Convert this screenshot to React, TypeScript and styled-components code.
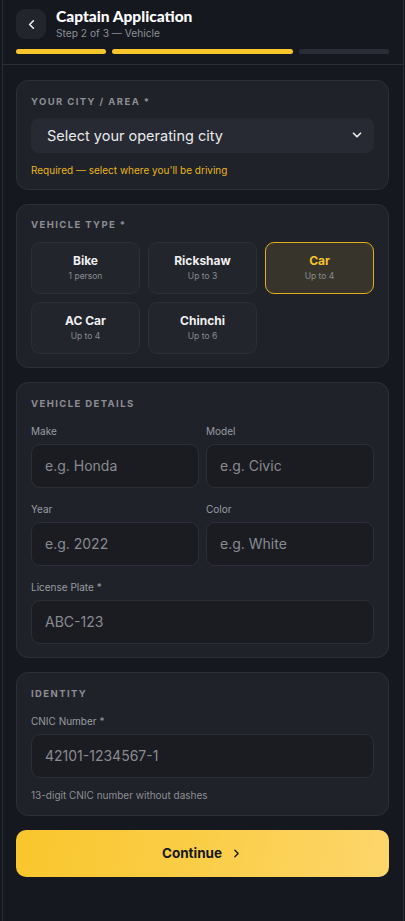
import React from "react";
import styled, { createGlobalStyle } from "styled-components";
import { ChevronLeft, ChevronDown, ChevronRight } from "lucide-react";

const Global = createGlobalStyle`
  html, body { margin: 0; padding: 0; background: #14171e; }
  body { font-family: Inter, "Liberation Sans", Arial, sans-serif; color: #e8e8ea; }
  * { box-sizing: border-box; }
`;

const Shell = styled.div`
  width: 402px;
  min-height: 921px;
  margin: 0 auto;
  background: #15181f;
  border-left: 1px solid #2a2d35;
  border-right: 1px solid #2a2d35;
`;

const Header = styled.header`
  padding: 9px 13.5px 10px;
  border-bottom: 1px solid #2a2d35;
`;

const TopRow = styled.div`
  display: flex;
  align-items: center;
  gap: 10px;
  height: 30px;
`;

const BackButton = styled.button`
  width: 30px;
  height: 30px;
  border: none;
  border-radius: 9px;
  background: #22252c;
  color: #f2f2f2;
  display: flex;
  align-items: center;
  justify-content: center;
  padding: 0;
`;

const TitleBlock = styled.div`
  display: flex;
  flex-direction: column;
  gap: 1px;
`;

const Title = styled.h1`
  margin: 0;
  font-family: Lato, Inter, sans-serif;
  font-weight: 900;
  font-size: 15.5px;
  line-height: 17px;
  color: #ffffff;
`;

const Subtitle = styled.div`
  font-size: 10.2px;
  line-height: 14px;
  color: #8c8f96;
`;

const Progress = styled.div`
  display: flex;
  gap: 6px;
  margin-top: 10px;
`;

const Bar = styled.div<{ $grow: number; $on: boolean }>`
  flex: ${(p) => p.$grow};
  height: 4.5px;
  border-radius: 3px;
  background: ${(p) => (p.$on ? "#f8c52c" : "#2a2d35")};
`;

const Content = styled.main`
  padding: 15px 13.5px;
  display: flex;
  flex-direction: column;
  gap: 14px;
`;

const Card = styled.section<{ $pb?: number }>`
  background: #1f2229;
  border: 1px solid #2c2f37;
  border-radius: 12px;
  padding: 14px 14px ${(p) => p.$pb ?? 13}px;
`;

const SectionLabel = styled.div<{ $mt?: number }>`
  font-size: 9.5px;
  font-weight: 700;
  letter-spacing: 1.4px;
  text-transform: uppercase;
  color: #8d8e92;
  line-height: 12px;
  margin-top: ${(p) => p.$mt ?? 0}px;
`;

const SelectBox = styled.div`
  margin-top: 10px;
  height: 35px;
  border-radius: 8px;
  background: #272a32;
  display: flex;
  align-items: center;
  justify-content: space-between;
  padding: 0 10px 0 16px;
  font-size: 14.5px;
  color: #e9e9eb;
`;

const Hint = styled.div<{ $warn?: boolean; $mt?: number }>`
  margin-top: ${(p) => p.$mt ?? 10}px;
  font-size: 10px;
  line-height: 14px;
  color: ${(p) => (p.$warn ? "#e8b51f" : "#8d8e92")};
`;

const TypeGrid = styled.div`
  margin-top: 11px;
  display: grid;
  grid-template-columns: repeat(3, 1fr);
  gap: 8px;
`;

const TypeOption = styled.div<{ $active?: boolean }>`
  height: 52px;
  border-radius: 9px;
  border: 1px solid ${(p) => (p.$active ? "#e3ad1e" : "#2c2f37")};
  background: ${(p) => (p.$active ? "#37352b" : "#22252c")};
  display: flex;
  flex-direction: column;
  align-items: center;
  justify-content: center;
  gap: 3px;
`;

const TypeName = styled.div<{ $active?: boolean }>`
  font-size: 12px;
  font-weight: 700;
  color: ${(p) => (p.$active ? "#f8c52c" : "#f0f0f2")};
  line-height: 14px;
`;

const TypeSub = styled.div`
  font-size: 8.5px;
  color: #8a8c91;
  line-height: 10px;
`;

const FieldGrid = styled.div<{ $cols: number }>`
  display: grid;
  grid-template-columns: repeat(${(p) => p.$cols}, 1fr);
  column-gap: 7px;
  row-gap: 14px;
  margin-top: 14px;
`;

const Field = styled.div`
  display: flex;
  flex-direction: column;
`;

const FieldLabel = styled.label`
  font-size: 10px;
  line-height: 14px;
  color: #9a9ca1;
`;

const Input = styled.div`
  margin-top: 6px;
  height: 44px;
  border-radius: 9px;
  border: 1px solid #2c2f37;
  background: #1a1c22;
  display: flex;
  align-items: center;
  padding: 0 13px;
  font-size: 14px;
  color: #898b90;
`;

const ContinueButton = styled.button`
  height: 47px;
  border: none;
  border-radius: 10px;
  background: linear-gradient(100deg, #f9c62c 0%, #fbcf4e 60%, #fdd66c 100%);
  color: #17181c;
  font-family: Inter, sans-serif;
  font-weight: 700;
  font-size: 13.5px;
  display: flex;
  align-items: center;
  justify-content: center;
  gap: 8px;
  padding: 0;
`;

const types = [
  { name: "Bike", sub: "1 person" },
  { name: "Rickshaw", sub: "Up to 3" },
  { name: "Car", sub: "Up to 4", active: true },
  { name: "AC Car", sub: "Up to 4" },
  { name: "Chinchi", sub: "Up to 6" },
];

export default function App() {
  return (
    <>
      <Global />
      <Shell>
        <Header>
          <TopRow>
            <BackButton aria-label="Back">
              <ChevronLeft size={15} strokeWidth={2.5} />
            </BackButton>
            <TitleBlock>
              <Title>Captain Application</Title>
              <Subtitle>Step 2 of 3 — Vehicle</Subtitle>
            </TitleBlock>
          </TopRow>
          <Progress>
            <Bar $grow={1} $on />
            <Bar $grow={2} $on />
            <Bar $grow={1} $on={false} />
          </Progress>
        </Header>
        <Content>
          <Card $pb={12}>
            <SectionLabel $mt={1}>Your City / Area *</SectionLabel>
            <SelectBox>
              <span>Select your operating city</span>
              <ChevronDown size={14} strokeWidth={3} />
            </SelectBox>
            <Hint $warn>Required — select where you'll be driving</Hint>
          </Card>

          <Card>
            <SectionLabel>Vehicle Type *</SectionLabel>
            <TypeGrid>
              {types.map((t) => (
                <TypeOption key={t.name} $active={t.active}>
                  <TypeName $active={t.active}>{t.name}</TypeName>
                  <TypeSub>{t.sub}</TypeSub>
                </TypeOption>
              ))}
            </TypeGrid>
          </Card>

          <Card>
            <SectionLabel $mt={1}>Vehicle Details</SectionLabel>
            <FieldGrid $cols={2}>
              <Field>
                <FieldLabel>Make</FieldLabel>
                <Input>e.g. Honda</Input>
              </Field>
              <Field>
                <FieldLabel>Model</FieldLabel>
                <Input>e.g. Civic</Input>
              </Field>
              <Field>
                <FieldLabel>Year</FieldLabel>
                <Input>e.g. 2022</Input>
              </Field>
              <Field>
                <FieldLabel>Color</FieldLabel>
                <Input>e.g. White</Input>
              </Field>
            </FieldGrid>
            <FieldGrid $cols={1}>
              <Field>
                <FieldLabel>License Plate *</FieldLabel>
                <Input>ABC-123</Input>
              </Field>
            </FieldGrid>
          </Card>

          <Card>
            <SectionLabel $mt={1}>Identity</SectionLabel>
            <FieldGrid $cols={1}>
              <Field>
                <FieldLabel>CNIC Number *</FieldLabel>
                <Input>42101-1234567-1</Input>
              </Field>
            </FieldGrid>
            <Hint $mt={10}>13-digit CNIC number without dashes</Hint>
          </Card>

          <ContinueButton>
            Continue
            <ChevronRight size={13} strokeWidth={2.5} />
          </ContinueButton>
        </Content>
      </Shell>
    </>
  );
}
